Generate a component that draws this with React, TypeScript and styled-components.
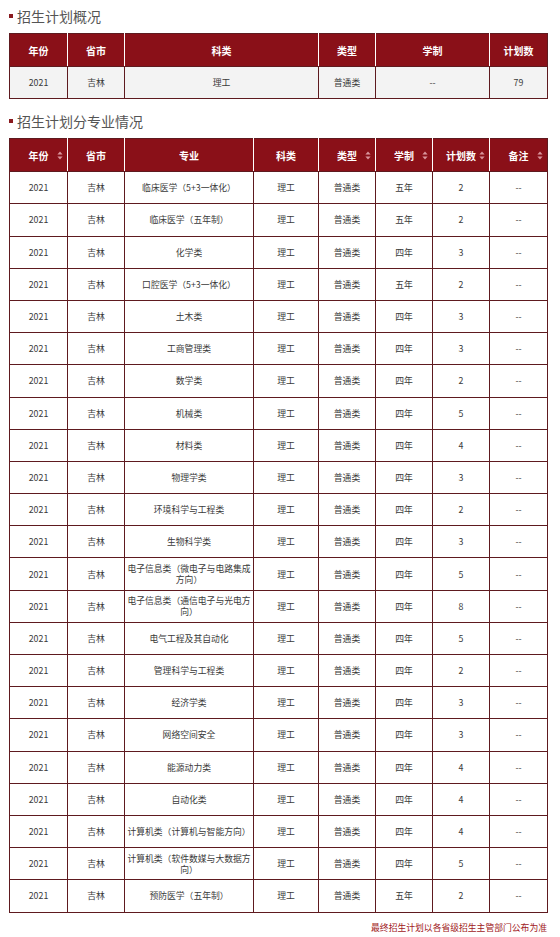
import React from "react";
import styled, { createGlobalStyle } from "styled-components";

type MajorRow = {
  major: string;
  length: string;
  count: number;
};

const rows: MajorRow[] = [
  { major: "临床医学（5+3一体化）", length: "五年", count: 2 },
  { major: "临床医学（五年制）", length: "五年", count: 2 },
  { major: "化学类", length: "四年", count: 3 },
  { major: "口腔医学（5+3一体化）", length: "五年", count: 2 },
  { major: "土木类", length: "四年", count: 3 },
  { major: "工商管理类", length: "四年", count: 3 },
  { major: "数学类", length: "四年", count: 2 },
  { major: "机械类", length: "四年", count: 5 },
  { major: "材料类", length: "四年", count: 4 },
  { major: "物理学类", length: "四年", count: 3 },
  { major: "环境科学与工程类", length: "四年", count: 2 },
  { major: "生物科学类", length: "四年", count: 3 },
  { major: "电子信息类（微电子与电路集成\n方向）", length: "四年", count: 5 },
  { major: "电子信息类（通信电子与光电方\n向）", length: "四年", count: 8 },
  { major: "电气工程及其自动化", length: "四年", count: 5 },
  { major: "管理科学与工程类", length: "四年", count: 2 },
  { major: "经济学类", length: "四年", count: 3 },
  { major: "网络空间安全", length: "四年", count: 3 },
  { major: "能源动力类", length: "四年", count: 4 },
  { major: "自动化类", length: "四年", count: 4 },
  { major: "计算机类（计算机与智能方向）", length: "四年", count: 4 },
  { major: "计算机类（软件数媒与大数据方\n向）", length: "四年", count: 5 },
  { major: "预防医学（五年制）", length: "五年", count: 2 },
];

const GlobalStyle = createGlobalStyle`
  body {
    margin: 0;
    background: #fff;
    font-family: "Microsoft YaHei", "Noto Sans CJK SC", "Noto Sans", sans-serif;
  }
`;

const Page = styled.div`
  width: 538px;
  padding: 6px 13px 0 9px;
`;

const SectionTitle = styled.h2<{ $first?: boolean }>`
  display: flex;
  align-items: center;
  gap: 4px;
  margin: ${(p) => (p.$first ? "0" : "12px")} 0 7px 0;
  height: 20px;
  font-size: 14px;
  font-weight: 400;
  color: #555;
  &::before {
    content: "";
    width: 4px;
    height: 4px;
    background: #8a1a1f;
  }
`;

const Table = styled.table`
  width: 538px;
  border-collapse: collapse;
  table-layout: fixed;
  border: 1px solid #5e1a1f;
`;

const Th = styled.th`
  position: relative;
  height: 32px;
  padding: 0;
  background: #8a1018;
  color: #fff;
  font-size: 10px;
  font-weight: 700;
  text-align: center;
  border-left: 1px solid #fff;
  border-bottom: 1px solid #5e1a1f;
  &:first-child {
    border-left: 1px solid #5e1a1f;
  }
`;

const Td = styled.td<{ $shade?: boolean }>`
  height: 31.2px;
  padding: 0 2px;
  font-size: 8.8px;
  line-height: 11px;
  color: #3a3a3a;
  text-align: center;
  white-space: pre-line;
  background: ${(p) => (p.$shade ? "#f3f3f3" : "#fff")};
  border: 1px solid #5e1a1f;
`;

const SortMark = styled.svg`
  position: absolute;
  right: 4px;
  top: 50%;
  margin-top: -4.5px;
`;

const Footnote = styled.p`
  margin: 8px 0 0 0;
  text-align: right;
  font-size: 8.8px;
  color: #a01822;
`;

const Sort = () => (
  <SortMark width="6" height="9" viewBox="0 0 6 9">
    <path d="M3 0.5 L5.6 3.6 L0.4 3.6 Z" fill="#d9959c" />
    <path d="M3 8.5 L5.6 5.4 L0.4 5.4 Z" fill="#d9959c" />
  </SortMark>
);

const summaryCols = [58, 57, 194, 57, 114, 58];
const detailCols = [58, 57, 129, 65, 57, 57, 57, 58];

const detailHead: { label: string; sort: boolean }[] = [
  { label: "年份", sort: true },
  { label: "省市", sort: false },
  { label: "专业", sort: false },
  { label: "科类", sort: false },
  { label: "类型", sort: true },
  { label: "学制", sort: true },
  { label: "计划数", sort: true },
  { label: "备注", sort: true },
];

export default function App() {
  return (
    <Page>
      <GlobalStyle />
      <SectionTitle $first>招生计划概况</SectionTitle>
      <Table>
        <colgroup>
          {summaryCols.map((w, i) => (
            <col key={i} style={{ width: w }} />
          ))}
        </colgroup>
        <thead>
          <tr>
            {["年份", "省市", "科类", "类型", "学制", "计划数"].map((h) => (
              <Th key={h}>{h}</Th>
            ))}
          </tr>
        </thead>
        <tbody>
          <tr>
            {["2021", "吉林", "理工", "普通类", "--", "79"].map((v, i) => (
              <Td key={i} $shade>
                {v}
              </Td>
            ))}
          </tr>
        </tbody>
      </Table>

      <SectionTitle>招生计划分专业情况</SectionTitle>
      <Table>
        <colgroup>
          {detailCols.map((w, i) => (
            <col key={i} style={{ width: w }} />
          ))}
        </colgroup>
        <thead>
          <tr>
            {detailHead.map((h) => (
              <Th key={h.label}>
                {h.label}
                {h.sort && <Sort />}
              </Th>
            ))}
          </tr>
        </thead>
        <tbody>
          {rows.map((r, i) => (
            <tr key={i}>
              <Td>2021</Td>
              <Td>吉林</Td>
              <Td>{r.major}</Td>
              <Td>理工</Td>
              <Td>普通类</Td>
              <Td>{r.length}</Td>
              <Td>{r.count}</Td>
              <Td>--</Td>
            </tr>
          ))}
        </tbody>
      </Table>
      <Footnote>最终招生计划以各省级招生主管部门公布为准</Footnote>
    </Page>
  );
}
